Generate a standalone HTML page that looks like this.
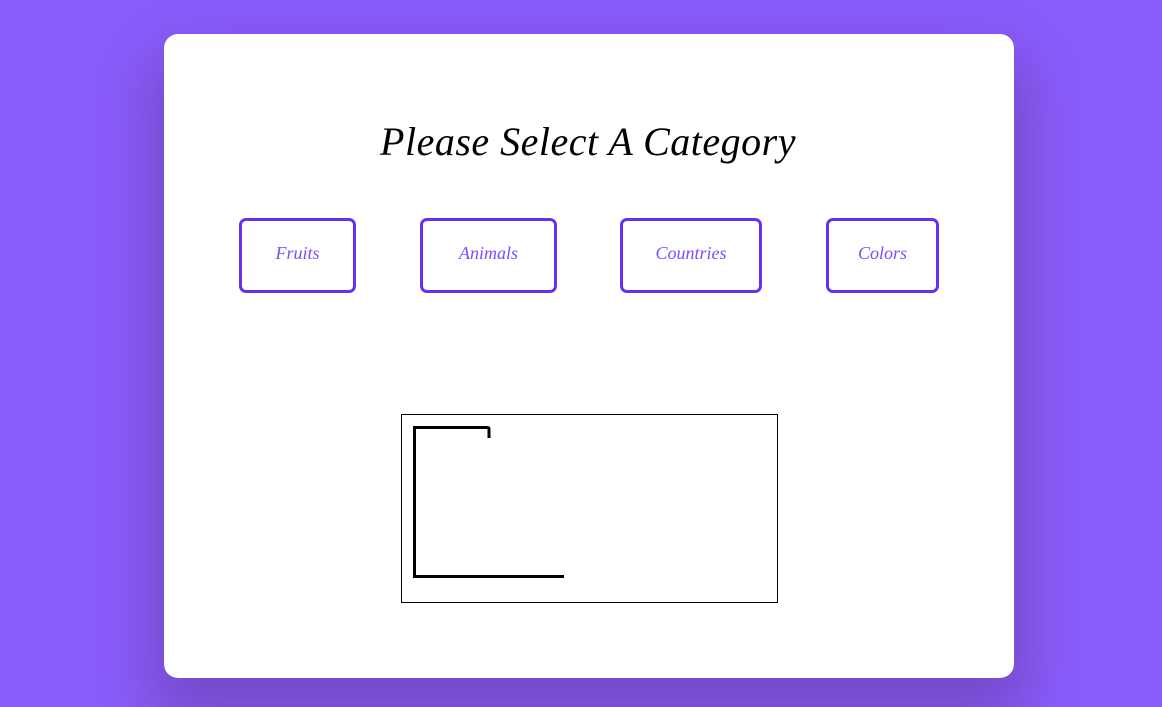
<!DOCTYPE html>
<html><head><style>
html,body{margin:0;padding:0;}
body{width:1162px;height:707px;background:#8a5cfb;position:relative;overflow:hidden;font-family:"Liberation Serif",serif;}
.card{position:absolute;left:164px;top:34px;width:850px;height:644px;background:#fff;border-radius:14px;box-shadow:0 30px 60px 10px rgba(100,60,160,0.6);}
h1{position:absolute;left:0;width:1176px;top:118px;margin:0;text-align:center;font-family:"Liberation Serif",serif;font-style:italic;font-weight:normal;font-size:40px;color:#000;letter-spacing:0.5px;}
.b{position:absolute;top:218px;height:69px;border:3px solid #6530f0;border-radius:7px;box-sizing:content-box;display:flex;align-items:center;justify-content:center;color:#7c4dff;font-style:italic;font-size:18px;padding-bottom:4px;height:65px;}
.cv{position:absolute;left:401px;top:414px;width:375px;height:187px;border:1px solid #000;background:#fff;}
</style></head><body>
<div class="card"></div>
<h1>Please Select A Category</h1>
<div class="b" style="left:239px;width:111px">Fruits</div>
<div class="b" style="left:420px;width:131px">Animals</div>
<div class="b" style="left:620px;width:136px">Countries</div>
<div class="b" style="left:826px;width:107px">Colors</div>
<div class="cv"></div>
<svg style="position:absolute;left:0;top:0" width="1162" height="707"><path d="M564 576.5H414.5V427.5H487.5Q489 427.5 489 429V438" fill="none" stroke="#000" stroke-width="3"/></svg>
</body></html>
